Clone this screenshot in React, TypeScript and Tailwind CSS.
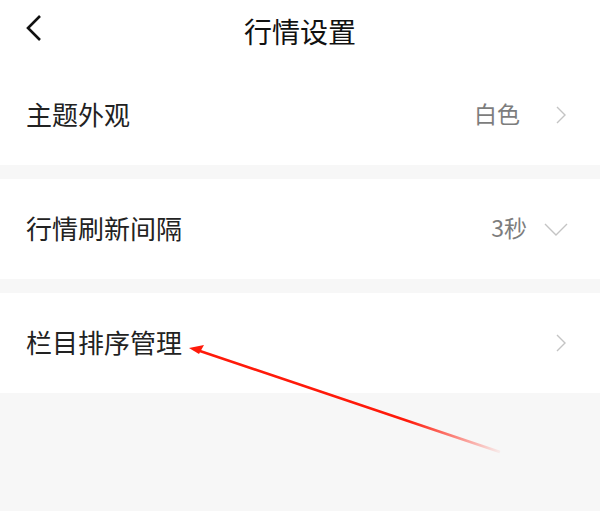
import React from 'react';

const font = { fontFamily: '"Noto Sans CJK SC", "Liberation Sans", sans-serif' };

// Flecha derecha gris
function ChevronRight() {
    return (
        <svg width="14" height="20" viewBox="0 0 14 20" fill="none" stroke="#c4c4c4" strokeWidth="1.4">
            <path d="M3 2 L11 10 L3 18" />
        </svg>
    );
}

function ChevronDown() {
    return (
        <svg width="24" height="16" viewBox="0 0 24 16" fill="none" stroke="#c4c4c4" strokeWidth="1.4">
            <path d="M1 3 L12 14 L23 3" />
        </svg>
    );
}

function Row({ label, value, icon, gap }: { label: string; value?: string; icon: React.ReactNode; gap: string }) {
    return (
        <div className="h-[100px] bg-white flex items-center justify-between pl-[26px] pr-[32px]">
            <span className="text-[26px] text-[#222] -mt-[3px]">{label}</span>
            <div className={`flex items-center ${gap}`}>
                {value && <span className="text-[23px] text-[#7d7d7d] -mt-[3px]">{value}</span>}
                {icon}
            </div>
        </div>
    );
}

export default function App() {
    return (
        <div className="relative w-[600px] h-[511px] bg-[#f7f7f7] overflow-hidden" style={font}>
            {/* Cabecera */}
            <div className="h-[65px] bg-white flex items-center relative">
                <svg className="absolute left-[25px] top-[14px]" width="18" height="28" viewBox="0 0 18 28" fill="none" stroke="#111" strokeWidth="2.6">
                    <path d="M15 2 L3 14 L15 26" />
                </svg>
                <h1 className="w-full text-center text-[28px] text-[#111] leading-none -mt-[4px]">行情设置</h1>
            </div>

            <Row label="主题外观" value="白色" icon={<ChevronRight />} gap="gap-[34px]" />
            <div className="h-[14px]" />
            <Row label="行情刷新间隔" value="3秒" icon={<ChevronDown />} gap="gap-[17px]" />
            <div className="h-[14px]" />
            <Row label="栏目排序管理" icon={<ChevronRight />} gap="gap-0" />

            {/* Flecha roja de anotación */}
            <svg className="absolute left-0 top-0 pointer-events-none" width="600" height="511">
                <defs>
                    <linearGradient id="fade" x1="190" y1="348" x2="500" y2="452" gradientUnits="userSpaceOnUse">
                        <stop offset="0" stopColor="#ff1a0a" />
                        <stop offset="0.7" stopColor="#ff1a0a" />
                        <stop offset="1" stopColor="#ff1a0a" stopOpacity="0.05" />
                    </linearGradient>
                </defs>
                <path d="M194 349 L500 452" stroke="url(#fade)" strokeWidth="2.6" />
                <path d="M189 348 L204 345 L199 354 Z" fill="#ff1a0a" />
            </svg>
        </div>
    );
}
